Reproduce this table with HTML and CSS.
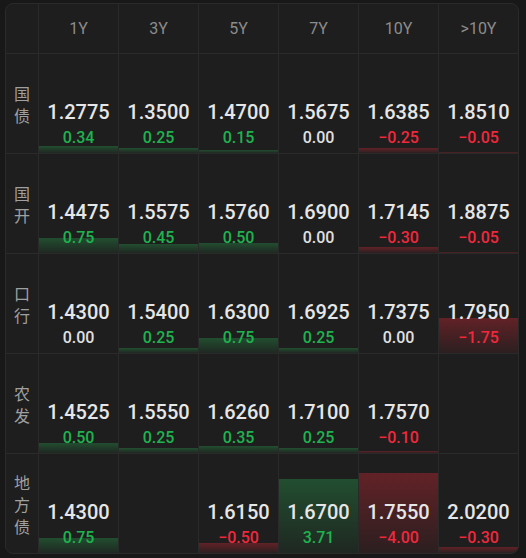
FILE: index.html
```html
<!DOCTYPE html>
<html lang="zh">
<head>
<meta charset="utf-8">
<link rel="stylesheet" href="styles.css">
</head>
<body>
<div class="board">
  <div class="hd corner"></div>
  <div class="hd">1Y</div>
  <div class="hd">3Y</div>
  <div class="hd">5Y</div>
  <div class="hd">7Y</div>
  <div class="hd">10Y</div>
  <div class="hd">&gt;10Y</div>

  <div class="lbl"><span>国</span><span>债</span></div>
  <div class="cell"><div class="bar up" style="height:7px"></div><div class="v">1.2775</div><div class="c up">0.34</div></div>
  <div class="cell"><div class="bar up" style="height:5px"></div><div class="v">1.3500</div><div class="c up">0.25</div></div>
  <div class="cell"><div class="bar up" style="height:3px"></div><div class="v">1.4700</div><div class="c up">0.15</div></div>
  <div class="cell"><div class="v">1.5675</div><div class="c">0.00</div></div>
  <div class="cell"><div class="bar dn" style="height:5px"></div><div class="v">1.6385</div><div class="c dn">−0.25</div></div>
  <div class="cell"><div class="bar dn" style="height:1px"></div><div class="v">1.8510</div><div class="c dn">−0.05</div></div>

  <div class="lbl"><span>国</span><span>开</span></div>
  <div class="cell"><div class="bar up" style="height:15px"></div><div class="v">1.4475</div><div class="c up">0.75</div></div>
  <div class="cell"><div class="bar up" style="height:9px"></div><div class="v">1.5575</div><div class="c up">0.45</div></div>
  <div class="cell"><div class="bar up" style="height:10px"></div><div class="v">1.5760</div><div class="c up">0.50</div></div>
  <div class="cell"><div class="v">1.6900</div><div class="c">0.00</div></div>
  <div class="cell"><div class="bar dn" style="height:6px"></div><div class="v">1.7145</div><div class="c dn">−0.30</div></div>
  <div class="cell"><div class="bar dn" style="height:1px"></div><div class="v">1.8875</div><div class="c dn">−0.05</div></div>

  <div class="lbl"><span>口</span><span>行</span></div>
  <div class="cell"><div class="v">1.4300</div><div class="c">0.00</div></div>
  <div class="cell"><div class="bar up" style="height:5px"></div><div class="v">1.5400</div><div class="c up">0.25</div></div>
  <div class="cell"><div class="bar up" style="height:15px"></div><div class="v">1.6300</div><div class="c up">0.75</div></div>
  <div class="cell"><div class="bar up" style="height:5px"></div><div class="v">1.6925</div><div class="c up">0.25</div></div>
  <div class="cell"><div class="v">1.7375</div><div class="c">0.00</div></div>
  <div class="cell"><div class="bar dn" style="height:35px"></div><div class="v">1.7950</div><div class="c dn">−1.75</div></div>

  <div class="lbl"><span>农</span><span>发</span></div>
  <div class="cell"><div class="bar up" style="height:10px"></div><div class="v">1.4525</div><div class="c up">0.50</div></div>
  <div class="cell"><div class="bar up" style="height:5px"></div><div class="v">1.5550</div><div class="c up">0.25</div></div>
  <div class="cell"><div class="bar up" style="height:7px"></div><div class="v">1.6260</div><div class="c up">0.35</div></div>
  <div class="cell"><div class="bar up" style="height:5px"></div><div class="v">1.7100</div><div class="c up">0.25</div></div>
  <div class="cell"><div class="bar dn" style="height:2px"></div><div class="v">1.7570</div><div class="c dn">−0.10</div></div>
  <div class="cell"></div>

  <div class="lbl"><span>地</span><span>方</span><span>债</span></div>
  <div class="cell"><div class="bar up" style="height:15px"></div><div class="v">1.4300</div><div class="c up">0.75</div></div>
  <div class="cell"></div>
  <div class="cell"><div class="bar dn" style="height:10px"></div><div class="v">1.6150</div><div class="c dn">−0.50</div></div>
  <div class="cell"><div class="bar up" style="height:74px"></div><div class="v">1.6700</div><div class="c up">3.71</div></div>
  <div class="cell"><div class="bar dn" style="height:80px"></div><div class="v">1.7550</div><div class="c dn">−4.00</div></div>
  <div class="cell"><div class="bar dn" style="height:6px"></div><div class="v">2.0200</div><div class="c dn">−0.30</div></div>
</div>
</body>
</html>
```

FILE: styles.css
```css
html, body {
  margin: 0;
  background: #181818;
}
body {
  padding: 3px 0 0 5px;
  font-family: Roboto, "Noto Sans CJK SC", sans-serif;
}
.board {
  width: 512px;
  display: grid;
  grid-template-columns: 32px repeat(6, 79px);
  grid-template-rows: 49px repeat(5, 99px);
  gap: 1px;
  background: #2a2a2a;
  border: 1px solid #2a2a2a;
  border-radius: 8px;
  overflow: hidden;
}
.hd, .lbl, .cell {
  background: #1e1e1e;
}
.hd {
  display: flex;
  align-items: center;
  justify-content: center;
  color: #8c8c8c;
  font-size: 16px;
}
.lbl {
  display: flex;
  flex-direction: column;
  align-items: center;
  justify-content: center;
  color: #a0a0a0;
  font-family: "Noto Sans CJK SC", sans-serif;
  font-size: 16px;
  line-height: 22px;
}
.cell {
  position: relative;
  display: flex;
  flex-direction: column;
  align-items: center;
  justify-content: flex-end;
  padding-bottom: 5px;
}
.bar {
  position: absolute;
  left: 0;
  right: 0;
  bottom: 0;
}
.bar.up {
  background: linear-gradient(to bottom, rgba(40, 150, 75, 0.40), rgba(40, 150, 75, 0.08));
}
.bar.dn {
  background: linear-gradient(to bottom, rgba(200, 40, 52, 0.40), rgba(200, 40, 52, 0.08));
}
.v, .c {
  position: relative;
}
.v {
  color: #e6e6e6;
  font-size: 20px;
  font-weight: 500;
  line-height: 24px;
  margin-bottom: 4px;
  margin-top: 1px;
}
.c {
  color: #e0e0e0;
  font-size: 16px;
  font-weight: 500;
  line-height: 20px;
}
.c.up { color: #1fb34f; }
.c.dn { color: #f0283c; }
```
